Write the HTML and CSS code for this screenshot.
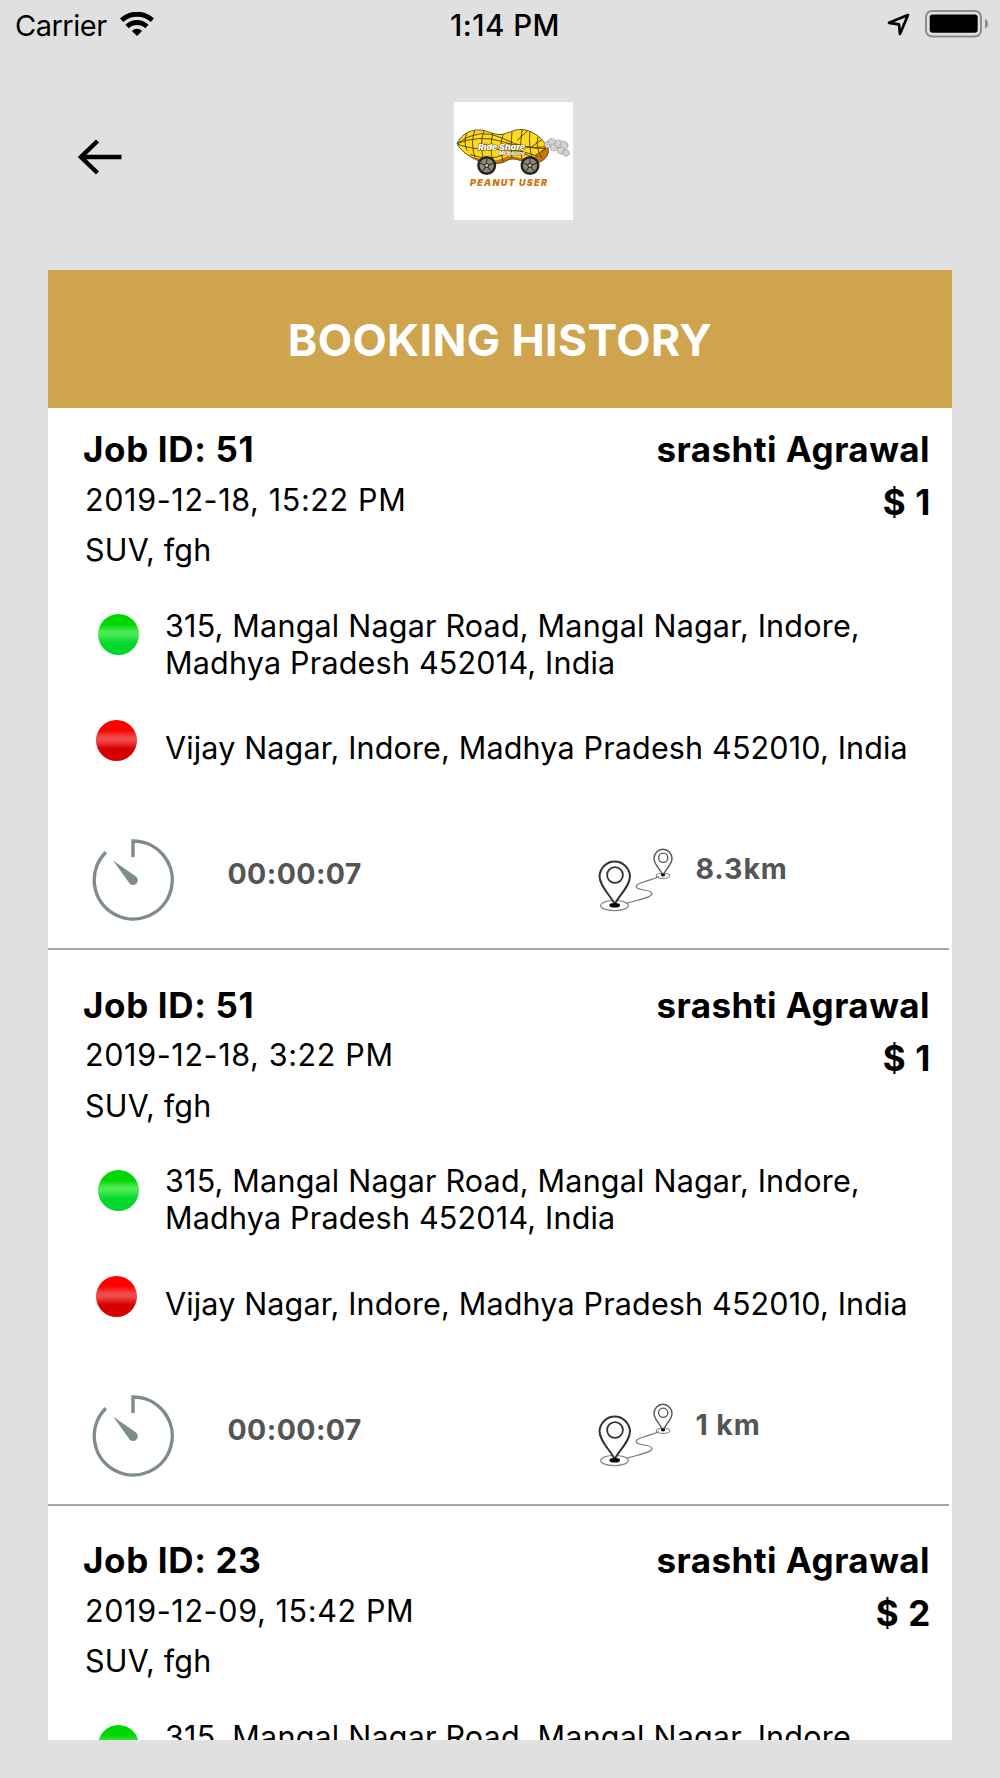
FILE: index.html
```html
<!DOCTYPE html>
<html lang="en">
<head>
    <meta charset="UTF-8">
    <meta name="viewport" content="width=device-width, initial-scale=1.0">
    <title>Booking History</title>
    <link rel="stylesheet" href="styles.css">
</head>
<body>
    <!-- Shared icons -->
    <svg class="icon-defs" aria-hidden="true">
        <symbol id="icon-timer" viewBox="0 0 82 82">
            <path d="M41 18V2A39 39 0 1 1 13.800 13.300" fill="none" stroke="#7f8c8d" stroke-width="3.400"/>
            <path d="M21 21.500L44 37.500A4.800 4.800 0 0 1 38 45Z" fill="#7f8c8d"/>
        </symbol>
        <symbol id="icon-route" viewBox="0 0 76 65">
            <ellipse cx="16.500" cy="57.500" rx="13.800" ry="5.200" fill="none" stroke="#8a8a8a" stroke-width="1.300"/>
            <ellipse cx="65" cy="27.800" rx="6.800" ry="2.600" fill="none" stroke="#8a8a8a" stroke-width="1.100"/>
            <path d="M28 55.500C38 52 54 50 54 45.500C54 41 38 43 38 38.500C38 34.500 52 33 61 28.500" fill="none" stroke="#777" stroke-width="1.200"/>
            <path d="M16.700 56C12 47 1.500 38 1.500 28A15.300 15.700 0 0 1 32 28C32 38 21.500 47 16.700 56Z" fill="#fff" stroke="#333" stroke-width="2"/>
            <circle cx="17" cy="27" r="7.900" fill="none" stroke="#333" stroke-width="1.800"/>
            <ellipse cx="16.700" cy="57.300" rx="5.300" ry="2.300" fill="#000"/>
            <path d="M65 27C62 21 56 16.500 56 10.500A9 9.300 0 0 1 74 10.500C74 16.500 68 21 65 27Z" fill="#fff" stroke="#555" stroke-width="1.400"/>
            <circle cx="65.200" cy="9.800" r="4.600" fill="none" stroke="#555" stroke-width="1.300"/>
            <ellipse cx="65" cy="27" rx="2.200" ry="1.400" fill="#111"/>
        </symbol>
    </svg>

    <div class="status-bar">
        <div class="carrier">
            <span>Carrier</span>
            <svg class="wifi" viewBox="0 0 34 24">
                <g fill="none" stroke="#000" stroke-width="4.900">
                    <path d="M1.600 8.300A22.500 22.500 0 0 1 32.400 8.300"/>
                    <path d="M7.100 14.500A14.200 14.200 0 0 1 26.900 14.500"/>
                </g>
                <path d="M17 24L11.900 18.900A7.300 7.300 0 0 1 22.100 18.900Z"/>
            </svg>
        </div>
        <div class="clock">1:14 PM</div>
        <div class="indicators">
            <svg class="location" viewBox="0 0 23 23">
                <path d="M21 2L2 9.800L12 11.300L13 21Z" fill="none" stroke="#000" stroke-width="2.700" stroke-linejoin="round"/>
            </svg>
            <svg class="battery" viewBox="0 0 63 28">
                <rect x="1" y="1" width="55" height="25.500" rx="6" fill="none" stroke="#8c8c8c" stroke-width="2"/>
                <rect x="4.700" y="4.600" width="48" height="18.200" rx="3" fill="#000"/>
                <path d="M60 9C64 10 64 17.500 60 18.500Z" fill="#8c8c8c"/>
            </svg>
        </div>
    </div>

    <header class="top-bar">
        <svg class="back" viewBox="0 0 44 36">
            <path d="M43.500 18H3M19.500 2L3 18L19.500 34" fill="none" stroke="#000" stroke-width="4.400"/>
        </svg>
        <svg class="logo" viewBox="4 3.500 118.500 118.500">
            <defs>
                <clipPath id="nut">
                    <path d="M7 45C12 35 21 31 30 31.500C38 32 44 36.500 51 36C59 35 64 30.500 72 31C82 31.500 91 39 95 45C100 50 99 56 95 60C90 65 82 66 76 64C68 61 62 59 57 62C51 66 40 66 33 64C24 61 11 54 7 45Z"/>
                </clipPath>
            </defs>
            <!-- peanut body -->
            <g clip-path="url(#nut)">
                <rect x="5" y="28" width="96" height="40" fill="#ffd91c"/>
                <path d="M7 47C16 58 26 61 36 60C46 65 52 59 58 58C66 56 76 64 84 59C89 55 94 52 96 45L102 52L95 68H25Z" fill="#cf7508"/>
                <g fill="none" stroke="#3a2c00" stroke-width="0.800">
                    <path d="M7 45Q30 28 53 40T97 48M7 45Q30 36 52 43T96 50M8 46Q26 52 47 51T88 58M20 56Q40 63 54 56T88 62"/>
                    <path d="M17 34Q13 43 17 52M25 31Q20 44 25 59M34 32Q29 45 34 63M43 34Q39 48 43 64M53 36Q49 48 53 63M62 33Q60 48 62 60M72 31Q69 47 72 62M80 33Q78 47 83 62M88 38Q85 49 92 60"/>
                    <path d="M79 31L67 42M92 41L82 48M96 50L85 57"/>
                </g>
            </g>
            <path d="M7 45C12 35 21 31 30 31.500C38 32 44 36.500 51 36C59 35 64 30.500 72 31C82 31.500 91 39 95 45C100 50 99 56 95 60C90 65 82 66 76 64C68 61 62 59 57 62C51 66 40 66 33 64C24 61 11 54 7 45Z" fill="none" stroke="#4b4630" stroke-width="0.900"/>
            <!-- smoke -->
            <g fill="#d2d2d2" stroke="#666" stroke-width="0.700" stroke-dasharray="1.500 1">
                <circle cx="98" cy="46" r="3.600"/>
                <circle cx="102" cy="43.500" r="3.600"/>
                <circle cx="104" cy="49" r="3.500"/>
                <circle cx="109" cy="45.500" r="4"/>
                <circle cx="114" cy="47" r="4"/>
                <circle cx="111" cy="52" r="3.600"/>
                <circle cx="116" cy="54.500" r="3.200"/>
            </g>
            <!-- wheels -->
            <g fill="#8b8b78" stroke="#232323" stroke-width="2.400">
                <circle cx="36.700" cy="67" r="8.300"/>
                <circle cx="80" cy="67" r="8.300"/>
            </g>
            <g stroke="#33332c" stroke-width="1.100" fill="#c4c4b0">
                <path d="M36.700 67V60M36.700 67L43.400 64.800M36.700 67L40.800 72.700M36.700 67L32.600 72.700M36.700 67L30 64.800"/>
                <path d="M80 67V60M80 67L86.700 64.800M80 67L84.100 72.700M80 67L75.900 72.700M80 67L73.300 64.800"/>
                <circle cx="36.700" cy="67" r="2"/>
                <circle cx="80" cy="67" r="2"/>
            </g>
            <text class="logo-name" x="28" y="51.300" textLength="47" lengthAdjust="spacingAndGlyphs">Ride Share</text>
            <text class="logo-city" x="49" y="56" textLength="26" lengthAdjust="spacingAndGlyphs">Melbourne</text>
            <text class="logo-user" x="20" y="87" textLength="77">PEANUT USER</text>
        </svg>
    </header>

    <main class="panel">
        <h1>BOOKING HISTORY</h1>
        <div class="jobs">
            <section class="job">
                <div class="job-head">
                    <div class="job-info">
                        <h2>Job ID: 51</h2>
                        <p class="date">2019-12-18, 15:22 PM</p>
                        <p>SUV, fgh</p>
                    </div>
                    <div class="job-customer">
                        <p class="name">srashti Agrawal</p>
                        <p class="price">$ 1</p>
                    </div>
                </div>
                <div class="stop pickup">
                    <span class="dot green"></span>
                    <p>315, Mangal Nagar Road, Mangal Nagar, Indore, Madhya Pradesh 452014, India</p>
                </div>
                <div class="stop dropoff">
                    <span class="dot red"></span>
                    <p>Vijay Nagar, Indore, Madhya Pradesh 452010, India</p>
                </div>
                <div class="job-stats">
                    <svg class="timer"><use href="#icon-timer"/></svg>
                    <span class="duration">00:00:07</span>
                    <svg class="route"><use href="#icon-route"/></svg>
                    <span class="distance">8.3km</span>
                </div>
            </section>

            <section class="job">
                <div class="job-head">
                    <div class="job-info">
                        <h2>Job ID: 51</h2>
                        <p class="date">2019-12-18, 3:22 PM</p>
                        <p>SUV, fgh</p>
                    </div>
                    <div class="job-customer">
                        <p class="name">srashti Agrawal</p>
                        <p class="price">$ 1</p>
                    </div>
                </div>
                <div class="stop pickup">
                    <span class="dot green"></span>
                    <p>315, Mangal Nagar Road, Mangal Nagar, Indore, Madhya Pradesh 452014, India</p>
                </div>
                <div class="stop dropoff">
                    <span class="dot red"></span>
                    <p>Vijay Nagar, Indore, Madhya Pradesh 452010, India</p>
                </div>
                <div class="job-stats">
                    <svg class="timer"><use href="#icon-timer"/></svg>
                    <span class="duration">00:00:07</span>
                    <svg class="route"><use href="#icon-route"/></svg>
                    <span class="distance">1 km</span>
                </div>
            </section>

            <section class="job">
                <div class="job-head">
                    <div class="job-info">
                        <h2>Job ID: 23</h2>
                        <p class="date">2019-12-09, 15:42 PM</p>
                        <p>SUV, fgh</p>
                    </div>
                    <div class="job-customer">
                        <p class="name">srashti Agrawal</p>
                        <p class="price">$ 2</p>
                    </div>
                </div>
                <div class="stop pickup">
                    <span class="dot green"></span>
                    <p>315, Mangal Nagar Road, Mangal Nagar, Indore,</p>
                </div>
            </section>
        </div>
    </main>
</body>
</html>
```
FILE: styles.css
```css
* {
    box-sizing: border-box;
}

body {
    margin: 0;
    height: 1778px;
    background-color: #e0e0e0;
    color: #000;
    font-family: Inter, sans-serif;
    overflow: hidden;
}

h1, h2, p {
    margin: 0;
}

svg {
    display: block;
    flex: none;
}

.icon-defs {
    display: none;
}

/* Status bar */
.status-bar {
    display: grid;
    grid-template-columns: 450px 1fr auto;
    height: 51px;
    line-height: 51px;
    padding-right: 12px;
}

.carrier {
    display: flex;
    padding-left: 15px;
    gap: 13px;
    font-size: 29px;
    letter-spacing: -0.5px;
}

.wifi {
    width: 34px;
    height: 24px;
    margin-top: 12px;
}

.clock {
    font-size: 29.5px;
    font-weight: 500;
    letter-spacing: 0.5px;
}

.indicators {
    display: flex;
    gap: 15px;
}

.location {
    width: 23px;
    height: 23px;
    margin-top: 13px;
}

.battery {
    width: 63px;
    height: 28px;
    margin-top: 10px;
}

/* Back button and logo */
.top-bar {
    display: flex;
    height: 219px;
    padding: 50.5px 0 0 78px;
}

.back {
    width: 44px;
    height: 36px;
    margin-top: 37px;
}

.logo {
    width: 118.5px;
    height: 118.5px;
    margin-left: 332px;
    background-color: #fff;
}

.logo text {
    font-style: italic;
    font-weight: 900;
}

.logo-name {
    font-size: 7.5px;
    fill: #fff;
    stroke: #5c4a10;
    stroke-width: 0.9px;
    paint-order: stroke;
}

.logo-city {
    font-size: 4.5px;
    fill: #fff;
    stroke: #4b4020;
    stroke-width: 0.7px;
    paint-order: stroke;
}

.logo-user {
    font-size: 9px;
    fill: #cf7508;
}

/* Booking list */
.panel {
    width: 904px;
    height: 1469.5px;
    margin-left: 48px;
    background-color: #fff;
    overflow: hidden;
}

.panel h1 {
    height: 138px;
    padding-top: 40px;
    background-color: #cfa44f;
    color: #fff;
    font-size: 44.5px;
    font-weight: 700;
    line-height: 60px;
    letter-spacing: 0.4px;
    text-align: center;
}

.jobs {
    height: 1331.5px;
    overflow: hidden;
}

.job {
    width: 901px;
    height: 555.5px;
    padding-top: 29.5px;
    border-bottom: 2px solid #a6a6a6;
    font-size: 30.5px;
}

.job:first-child {
    height: 542px;
    padding-top: 16px;
}

.job-head {
    display: flex;
    justify-content: space-between;
    height: 182.5px;
    padding: 0 19px 0 35px;
    line-height: 50.5px;
    letter-spacing: 0.2px;
}

.job-head h2,
.name,
.price {
    font-size: 35px;
    font-weight: 700;
    line-height: 50px;
    letter-spacing: 0.65px;
}

.job-info p {
    padding-left: 2px;
}

.job-info .date {
    padding-top: 0.5px;
    letter-spacing: 0.63px;
}

.job-customer {
    text-align: right;
}

.job-customer .name {
    letter-spacing: 0.46px;
}

.price {
    margin-right: -1px;
    padding-top: 3px;
}

.stop {
    display: flex;
    line-height: 37.2px;
    letter-spacing: 0.2px;
}

.stop p {
    width: 760px;
}

.pickup {
    height: 113.5px;
    padding-left: 50px;
    gap: 26px;
}

.dropoff {
    height: 119px;
    padding-left: 48px;
    gap: 28px;
}

.dropoff p {
    padding-top: 9px;
    letter-spacing: 0.16px;
}

.dot {
    flex: none;
    width: 41px;
    height: 41px;
    border-radius: 50%;
}

.green {
    margin-top: 7.5px;
    background: linear-gradient(#00d600 25%, #4bea55 42%, #4bea55 50%, #00d82c 72%);
}

.red {
    background: linear-gradient(#fe0000 25%, #f14a4a 42%, #f14a4a 50%, #d60000 70%);
}

.job-stats {
    display: flex;
    padding-left: 43.5px;
    color: #555;
    font-size: 28.5px;
    font-weight: 700;
    line-height: 40px;
}

.timer {
    width: 82px;
    height: 82px;
}

.duration {
    width: 370px;
    margin-top: 15px;
    padding-left: 54px;
    letter-spacing: 0.4px;
}

.route {
    width: 76px;
    height: 65px;
    margin: 8.5px 22px 0 54px;
}

.distance {
    margin-top: 10px;
    letter-spacing: 0.9px;
}
```
